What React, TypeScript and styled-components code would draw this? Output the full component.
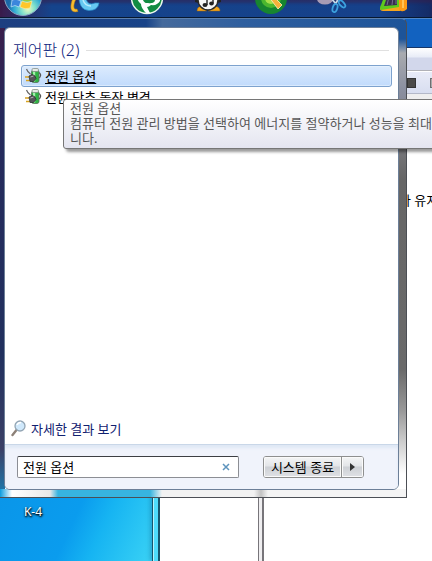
import React, { useState } from 'react';
import styled, { createGlobalStyle, css } from 'styled-components';

const GlobalStyle = createGlobalStyle`
  * { box-sizing: border-box; }
  body {
    margin: 0;
    font: 13px/16px "Noto Sans", "Noto Sans CJK KR", sans-serif;
    color: #000;
    background: #fff;
  }
  button, input { font: inherit; color: inherit; }
`;

const Screen = styled.div`
  position: relative;
  display: flex;
  flex-direction: column;
  min-height: 100vh;
  overflow: hidden;
`;

const Taskbar = styled.nav`
  display: flex;
  align-items: flex-start;
  height: 18px;
  flex: none;
  overflow: hidden;
  padding-left: 4px;
  background: linear-gradient(90deg, #3a1c4c 0, #15448c 12%, #16418a 88%, #142b66 100%);
  box-shadow: inset 0 3px 3px #3a1c4680;
  border-bottom: 1px solid #07182f;
`;

const TaskButton = styled.button<{ $w: number }>`
  width: ${(p) => p.$w}px;
  flex: none;
  height: 17px;
  padding: 0;
  border: 0;
  background: none;
  svg { display: block; }
`;

const Desktop = styled.main`
  display: flex;
  flex: 1;
`;

const Wallpaper = styled.section`
  display: flex;
  flex-direction: column;
  justify-content: flex-end;
  width: 152px;
  flex: none;
  padding: 0 0 40px 11px;
  background: linear-gradient(115deg, #0a86dc 0, #0a9cee 76%, #16b4f2 84%, #3ad2f5 100%);
`;

const ShortcutLabel = styled.span`
  width: 44px;
  color: #fff;
  font-size: 12px;
  line-height: 18px;
  text-align: center;
  text-shadow: 1px 1px 2px #000, 0 1px 2px #000;
`;

const AeroEdge = styled.div`
  width: 8px;
  flex: none;
  background: #4fdcfb;
  border: solid #17566e;
  border-width: 0 2px 0 1px;
  box-shadow: inset 1px 0 #b5f3fd, -2px 0 4px #0a6a9a66;
`;

const BackWindow = styled.section`
  width: 98px;
  flex: none;
  background: #fff;
`;

const GreyEdge = styled.div`
  width: 6px;
  flex: none;
  background: #efeef0;
  border: solid #77757a;
  border-width: 0 2px 0 1px;
`;

const FrontWindow = styled.section`
  flex: 1;
  min-width: 0;
  overflow: hidden;
  background: #fff;
`;

const WindowTitle = styled.div`
  height: 30px;
  background: #1262c0;
  border-top: 1px solid #4f86c8;
  border-bottom: 1px solid #163668;
`;

const WindowMenu = styled.div`
  height: 23px;
  background: linear-gradient(#fff 0, #e8ecf7 9px, #d2d7eb 10px, #d2d7eb 100%);
  border-bottom: 1px solid #b0b1b6;
`;

const WindowTools = styled.div`
  display: flex;
  align-items: center;
  justify-content: flex-end;
  gap: 14px;
  height: 23px;
  background: linear-gradient(#e8ebf7, #d8def0);
  border: solid;
  border-color: #fff transparent #b3b8c8;
  border-width: 1px 0;
`;

const ToolIcon = styled.span<{ $w: number; $light?: boolean }>`
  width: ${(p) => p.$w}px;
  height: 10px;
  background: ${(p) => (p.$light ? '#a9a9ab' : '#4c4b49')};
  border: solid ${(p) => (p.$light ? '#6f6f72' : '#353535')};
  border-width: 1px ${(p) => (p.$light ? 0 : 1)}px 1px 1px;
`;

const WindowBody = styled.div`
  height: 120px;
  padding: 92px 0 0 135px;
  white-space: nowrap;
  border-top: 6px solid #eee;
`;

const StartMenu = styled.aside`
  position: absolute;
  top: 18px;
  left: 0;
  width: 407px;
  height: 480px;
  display: flex;
  padding: 8px 7px 7px 4px;
  border: 1px solid #4c4f55;
  border-left: 0;
  border-top-color: #5c80ae;
  border-radius: 0 6px 0 0;
  background:
    linear-gradient(90deg, #0a9cdf 0, #fff 12px, #e8e8e8 50px, #37b4e0 58px, #37b4e0 150px, #f2f2f2 162px, #f2f2f2 254px, #c2c2c2 261px, #f4f4f4 268px) bottom / 100% 8px no-repeat,
    linear-gradient(90deg, #1d3f80, #184388 36%, #456a9c 40%, #2f5f9f 60%, #1d5499 100%) top / 100% 9px no-repeat,
    linear-gradient(#3b1d49, #262a5c 20%, #21305e 70%, #3b4066 90%, #1b7fb4 100%) left / 5px 100% no-repeat,
    linear-gradient(#1d5499 0, #1d5499 20px, #a9abb0 34px, #8b90a0 70px, #77777a 130px, #666 160px, #6a6a6a 350px, #999 392px, #ccc 422px, #fff 455px);
`;

const Panel = styled.div`
  display: flex;
  flex-direction: column;
  flex: 1;
  min-width: 0;
  background: #fff;
  border: 1px solid #6c7f98;
  border-radius: 6px;
  overflow: hidden;
`;

const Results = styled.div`
  flex: 1;
  padding: 12px 6px 0 8px;
`;

const Heading = styled.h2`
  display: flex;
  align-items: center;
  gap: 7px;
  margin: 0 3px 5px 0;
  font-size: 16px;
  line-height: 20px;
  font-weight: 300;
  color: #102680;
  &::after {
    content: "";
    flex: 1;
    height: 1px;
    background: #e0e0e0;
  }
`;

const ResultList = styled.ul`
  margin: 0;
  padding: 0 0 0 8px;
  list-style: none;
  li { height: 21px; }
`;

const ResultLink = styled.a<{ $active?: boolean }>`
  display: flex;
  align-items: center;
  gap: 3px;
  height: 22px;
  padding: 0 3px;
  border: 1px solid transparent;
  border-radius: 3px;
  color: #000;
  text-decoration: none;
  ${(p) =>
    p.$active &&
    css`
      text-decoration: underline;
      text-underline-offset: 2px;
      border-color: #7da2ce;
      background: linear-gradient(#dcebfd, #c1dbfc);
      box-shadow: inset 0 0 0 1px #e9f3fe99;
    `}
`;

const MoreLink = styled.a`
  display: flex;
  align-items: center;
  gap: 4px;
  padding: 0 6px 7px;
  color: #10206f;
  text-decoration: none;
`;

const Footer = styled.form`
  display: flex;
  align-items: center;
  gap: 24px;
  height: 45px;
  padding: 0 12px;
  background: #f0f3fb;
  border-top: 1px solid #c9d7e8;
  box-shadow: inset 0 3px 3px #dfe8f5;
`;

const SearchField = styled.label`
  display: flex;
  align-items: center;
  width: 222px;
  height: 22px;
  padding: 0 6px 0 5px;
  background: #fff;
  border: 1px solid #8c8e94;
  border-top-color: #3d3f43;
  border-radius: 2px;
`;

const SearchInput = styled.input`
  flex: 1;
  min-width: 0;
  padding: 0;
  border: 0;
  outline: 0;
  background: none;
`;

const ClearButton = styled.button`
  display: flex;
  padding: 2px;
  border: 0;
  background: none;
`;

const ButtonPair = styled.div`
  display: flex;
  height: 22px;
  border: 1px solid #8e8f8f;
  border-radius: 3px;
  overflow: hidden;
`;

const PowerButton = styled.button<{ $w: number }>`
  display: flex;
  align-items: center;
  justify-content: center;
  width: ${(p) => p.$w}px;
  padding: 0;
  border: 0;
  white-space: nowrap;
  background: linear-gradient(#f4f5f6 0, #e3e5e8 45%, #cdd0d5 50%, #dfe1e5 100%);
  box-shadow: inset 0 0 0 1px #fafafa;
  & + & { border-left: 1px solid #8e8f8f; }
`;

const Tooltip = styled.div`
  position: absolute;
  top: 99px;
  left: 63px;
  right: -30px;
  padding: 1px 6px 2px;
  overflow: hidden;
  white-space: nowrap;
  line-height: 15px;
  color: #575757;
  background: linear-gradient(#fff, #e4e5f0);
  border: 1px solid #767676;
  border-radius: 3px;
  box-shadow: 3px 3px 3px #0006;
`;

const StartOrb = () => (
  <svg width="40" height="17" viewBox="0 0 40 17">
    <defs>
      <radialGradient id="orb" cx="24" cy="9" r="20" gradientUnits="userSpaceOnUse">
        <stop offset="0" stopColor="#eafbc0" />
        <stop offset=".35" stopColor="#7fe0cc" />
        <stop offset=".7" stopColor="#2fa8d4" />
        <stop offset="1" stopColor="#1a68a8" />
      </radialGradient>
    </defs>
    <circle cx="19" cy="-3" r="18.5" fill="url(#orb)" stroke="#8ba9c4" />
    <path d="M8 0q4-2 9 1l-2 6q-4-3-8 0z" fill="#3b86dc" stroke="#d8efff" strokeWidth=".6" />
    <path d="M18 1q5 3 10 0l-2 7q-5 2-10-1z" fill="#ffc629" stroke="#fff0b0" strokeWidth=".6" />
    <path d="M19-5q5 3 10 0l-1 5q-5 3-10 0z" fill="#9bcd3b" />
  </svg>
);

const Explorer = () => (
  <svg width="34" height="17" viewBox="0 0 34 17">
    <path d="M10-6Q9 10 20 10.500q9 0 10-7.500h-4q-7 3-9-4z" fill="#66c9f2" stroke="#2a8cc9" strokeWidth=".7" />
    <path d="M14 0q2 6 8 6" fill="none" stroke="#b8ecfd" strokeWidth="1.5" />
    <path d="M4-2C1 5 0 14 9 11.500l-1-2.500C4 10 4 5 7-1z" fill="#f8bd2e" stroke="#b97c12" strokeWidth=".5" />
  </svg>
);

const Torrent = () => (
  <svg width="36" height="17" viewBox="0 0 36 17">
    <circle cx="17" cy="-2" r="15.500" fill="#138c43" stroke="#eef8ee" strokeWidth="1.4" />
    <path d="M7-4h5q1 8 6 7 5 1 7-2l-1-4h6v4q-3 5-9 4-2 2-4 2l3 6-4 0q-5-5-5-9-4-3-4-8z" fill="#fff" />
  </svg>
);

const Penguin = () => (
  <svg width="34" height="17" viewBox="0 0 34 17">
    <path d="M1-2h4v5l-4-1zM23-2h4v4l-4 1z" fill="#222" />
    <path d="M3 11q0-4 4-5l6 5zM14 11l7-5q5 1 5 5z" fill="#f2a51c" stroke="#9d6410" strokeWidth=".5" />
    <circle cx="14" cy="0" r="10" fill="#f6f6f6" stroke="#2a2a2a" strokeWidth="1.500" />
    <path d="M13 5v-7l6-1v6" stroke="#222" strokeWidth="1.400" fill="none" />
    <ellipse cx="11" cy="5" rx="2.500" ry="2" fill="#222" />
    <ellipse cx="17.500" cy="3.500" rx="2.300" ry="2" fill="#222" />
  </svg>
);

const GreenDisc = () => (
  <svg width="34" height="17" viewBox="0 0 34 17">
    <circle cx="16" cy="-2" r="16" fill="#17852f" />
    <circle cx="16" cy="-2" r="10" fill="#4bb72e" />
    <circle cx="16" cy="-2" r="6" fill="#a6e04a" />
    <path d="M14-3l4-1 9 9-4 4z" fill="#f8b13a" stroke="#fff0c0" strokeWidth=".8" />
  </svg>
);

const Scissors = () => (
  <svg width="34" height="17" viewBox="0 0 34 17">
    <ellipse cx="9" cy="-1" rx="8" ry="5.500" fill="#a79bb4" />
    <g fill="none" stroke="#3ca2df" strokeWidth="1.800">
      <path d="M15-2l5 6M24-4l-4 7" stroke="#c4d7e5" />
      <ellipse cx="19" cy="8" rx="2.300" ry="4.200" transform="rotate(18 19 8)" />
      <ellipse cx="26" cy="4" rx="2.200" ry="4.200" transform="rotate(-42 26 4)" />
    </g>
  </svg>
);

const Film = () => (
  <svg width="34" height="17" viewBox="0 0 34 17">
    <path d="M2 8l20-2v5H5q-3 0-3-3z" fill="#f6a51e" />
    <path d="M6-3h15v10L3 10q-2-2 0-5z" fill="#5ec91d" />
    <path d="M9-3h10v8L6 6z" fill="#37304e" />
    <path d="M11-3L9 5M15-3l-1 8M18-3v7" stroke="#776d92" />
    <path d="M21-3h8v12q-4 4-8 1z" fill="#fb9b16" />
    <path d="M25 0v8" stroke="#ffd06c" strokeWidth="1.500" />
  </svg>
);

const PowerIcon = () => (
  <svg width="17" height="17" viewBox="0 0 17 17" aria-hidden="true">
    <path d="M1.500 1q1 3 4 5" fill="none" stroke="#666" strokeWidth="1.200" />
    <path d="M13 4q4 2 2 5l-3 2" fill="none" stroke="#555" strokeWidth="1.200" />
    <rect x="6.500" y="2" width="7.500" height="12.500" rx="2" fill="#2fb344" stroke="#59705c" strokeWidth=".8" />
    <rect x="8" y="3.500" width="2.200" height="10" fill="#a4efab" />
    <rect x="7" y=".5" width="6.500" height="3" rx="1.300" fill="#e6ebe6" stroke="#7a837b" strokeWidth=".7" />
    <path d="M0 9h4M1 12.500h4" stroke="#d7a321" strokeWidth="1.600" />
    <path d="M4 8l3-1.500q3.500.5 4 4l-2.500 3H5z" fill="#55565a" stroke="#28282a" strokeWidth=".7" />
    <path d="M5.500 9l3-1" stroke="#b5b5b8" />
  </svg>
);

const Magnifier = () => (
  <svg width="16" height="17" viewBox="0 0 16 17" aria-hidden="true">
    <path d="M5.500 10L1.500 15" stroke="#8d8178" strokeWidth="2.400" strokeLinecap="round" />
    <circle cx="9" cy="6" r="5" fill="#cfe8fb" stroke="#93a5b4" strokeWidth="1.300" />
    <path d="M6 5q1-2.500 4-2.500" stroke="#fff" strokeWidth="1.500" fill="none" />
  </svg>
);

const tasks = [
  { name: '시작', w: 65, icon: <StartOrb /> },
  { name: 'Internet Explorer', w: 61, icon: <Explorer /> },
  { name: 'µTorrent', w: 64, icon: <Torrent /> },
  { name: '음악', w: 61, icon: <Penguin /> },
  { name: '디스크', w: 61, icon: <GreenDisc /> },
  { name: '캡처 도구', w: 62, icon: <Scissors /> },
  { name: '동영상', w: 40, icon: <Film /> },
];

export default function App() {
  const [query, setQuery] = useState('전원 옵션');
  return (
    <Screen>
      <GlobalStyle />
      <Taskbar>
        {tasks.map((t) => (
          <TaskButton key={t.name} $w={t.w} aria-label={t.name}>{t.icon}</TaskButton>
        ))}
      </Taskbar>
      <Desktop>
        <Wallpaper><ShortcutLabel>K-4</ShortcutLabel></Wallpaper>
        <AeroEdge />
        <BackWindow />
        <GreyEdge />
        <FrontWindow>
          <WindowTitle />
          <WindowMenu />
          <WindowTools><ToolIcon $w={9} /><ToolIcon $w={2} $light /></WindowTools>
          <WindowBody>가 유지</WindowBody>
        </FrontWindow>
      </Desktop>
      <StartMenu>
        <Panel>
          <Results>
            <Heading>제어판 (2)</Heading>
            <ResultList>
              <li><ResultLink href="#options" $active><PowerIcon />전원 옵션</ResultLink></li>
              <li><ResultLink href="#buttons"><PowerIcon />전원 단추 동작 변경</ResultLink></li>
            </ResultList>
          </Results>
          <MoreLink href="#more"><Magnifier />자세한 결과 보기</MoreLink>
          <Footer onSubmit={(e) => e.preventDefault()}>
            <SearchField>
              <SearchInput aria-label="검색" value={query} onChange={(e) => setQuery(e.target.value)} />
              <ClearButton type="button" aria-label="지우기" onClick={() => setQuery('')}>
                <svg width="8" height="8" viewBox="0 0 8 8"><path d="M1 1l6 6M7 1L1 7" stroke="#5e94bd" strokeWidth="1.500" /></svg>
              </ClearButton>
            </SearchField>
            <ButtonPair>
              <PowerButton type="button" $w={77}>시스템 종료</PowerButton>
              <PowerButton type="button" $w={22} aria-label="종료 옵션">
                <svg width="5" height="8" viewBox="0 0 5 8"><path d="M0 0l5 4-5 4z" fill="#333" /></svg>
              </PowerButton>
            </ButtonPair>
          </Footer>
        </Panel>
      </StartMenu>
      <Tooltip role="tooltip">전원 옵션<br />컴퓨터 전원 관리 방법을 선택하여 에너지를 절약하거나 성능을 최대<br />니다.</Tooltip>
    </Screen>
  );
}
